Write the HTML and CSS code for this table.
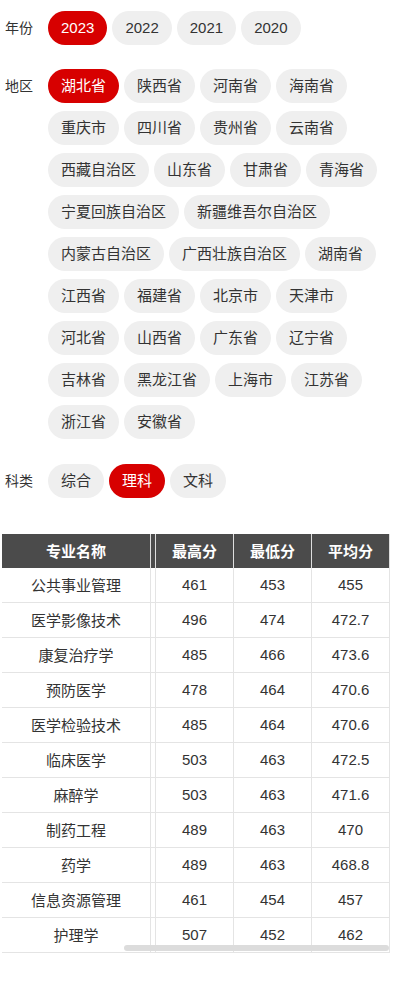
FILE: index.html
```html
<!DOCTYPE html>
<html lang="zh-CN">
<head>
<meta charset="utf-8">
<title>分数线</title>
<link rel="stylesheet" href="styles.css">
</head>
<body>
<div class="page">
  <div class="filter filter-year">
    <div class="label">年份</div>
    <div class="pills">
      <span class="pill active">2023</span>
      <span class="pill">2022</span>
      <span class="pill">2021</span>
      <span class="pill">2020</span>
    </div>
  </div>
  <div class="filter">
    <div class="label">地区</div>
    <div class="pills">
      <span class="pill active">湖北省</span>
      <span class="pill">陕西省</span>
      <span class="pill">河南省</span>
      <span class="pill">海南省</span>
      <span class="pill">重庆市</span>
      <span class="pill">四川省</span>
      <span class="pill">贵州省</span>
      <span class="pill">云南省</span>
      <span class="pill">西藏自治区</span>
      <span class="pill">山东省</span>
      <span class="pill">甘肃省</span>
      <span class="pill">青海省</span>
      <span class="pill">宁夏回族自治区</span>
      <span class="pill">新疆维吾尔自治区</span>
      <span class="pill">内蒙古自治区</span>
      <span class="pill">广西壮族自治区</span>
      <span class="pill">湖南省</span>
      <span class="pill">江西省</span>
      <span class="pill">福建省</span>
      <span class="pill">北京市</span>
      <span class="pill">天津市</span>
      <span class="pill">河北省</span>
      <span class="pill">山西省</span>
      <span class="pill">广东省</span>
      <span class="pill">辽宁省</span>
      <span class="pill">吉林省</span>
      <span class="pill">黑龙江省</span>
      <span class="pill">上海市</span>
      <span class="pill">江苏省</span>
      <span class="pill">浙江省</span>
      <span class="pill">安徽省</span>
    </div>
  </div>
  <div class="filter">
    <div class="label">科类</div>
    <div class="pills">
      <span class="pill">综合</span>
      <span class="pill active">理科</span>
      <span class="pill">文科</span>
    </div>
  </div>

  <div class="table-wrap">
    <div class="row head">
      <div class="cell">专业名称</div><div class="cell gap"></div><div class="cell">最高分</div><div class="cell">最低分</div><div class="cell">平均分</div>
    </div>
    <div class="row"><div class="cell">公共事业管理</div><div class="cell gap"></div><div class="cell">461</div><div class="cell">453</div><div class="cell">455</div></div>
    <div class="row"><div class="cell">医学影像技术</div><div class="cell gap"></div><div class="cell">496</div><div class="cell">474</div><div class="cell">472.7</div></div>
    <div class="row"><div class="cell">康复治疗学</div><div class="cell gap"></div><div class="cell">485</div><div class="cell">466</div><div class="cell">473.6</div></div>
    <div class="row"><div class="cell">预防医学</div><div class="cell gap"></div><div class="cell">478</div><div class="cell">464</div><div class="cell">470.6</div></div>
    <div class="row"><div class="cell">医学检验技术</div><div class="cell gap"></div><div class="cell">485</div><div class="cell">464</div><div class="cell">470.6</div></div>
    <div class="row"><div class="cell">临床医学</div><div class="cell gap"></div><div class="cell">503</div><div class="cell">463</div><div class="cell">472.5</div></div>
    <div class="row"><div class="cell">麻醉学</div><div class="cell gap"></div><div class="cell">503</div><div class="cell">463</div><div class="cell">471.6</div></div>
    <div class="row"><div class="cell">制药工程</div><div class="cell gap"></div><div class="cell">489</div><div class="cell">463</div><div class="cell">470</div></div>
    <div class="row"><div class="cell">药学</div><div class="cell gap"></div><div class="cell">489</div><div class="cell">463</div><div class="cell">468.8</div></div>
    <div class="row"><div class="cell">信息资源管理</div><div class="cell gap"></div><div class="cell">461</div><div class="cell">454</div><div class="cell">457</div></div>
    <div class="row"><div class="cell">护理学</div><div class="cell gap"></div><div class="cell">507</div><div class="cell">452</div><div class="cell">462</div></div>
    <div class="scrollbar"></div>
  </div>
</div>
</body>
</html>
```

FILE: styles.css
```css
* { box-sizing: border-box; }
html, body { margin: 0; padding: 0; background: #fff; }
body {
  font-family: "Liberation Sans", "Noto Sans CJK SC", sans-serif;
  color: #333;
}
.page { padding-top: 10.5px; }

.filter {
  display: flex;
  align-items: flex-start;
  padding-left: 5px;
  margin-bottom: 24.5px;
}
.label {
  width: 43px;
  flex: none;
  font-size: 14px;
  line-height: 34px;
  color: #333;
}
.pills {
  display: flex;
  flex-wrap: wrap;
  column-gap: 5px;
  row-gap: 8px;
  flex: 1;
}
.pill {
  display: block;
  height: 34px;
  line-height: 34px;
  padding: 0 13px;
  border-radius: 17px;
  background: #efefef;
  font-size: 15px;
  color: #333;
  white-space: nowrap;
}
.pill.active {
  background: #d70000;
  color: #fff;
}

.table-wrap {
  position: relative;
  margin: 36px 0 0 2px;
  width: 388px;
}
.row {
  display: grid;
  grid-template-columns: 149px 5px 78px 78px 78px;
  height: 35px;
  border-bottom: 1px solid #e4e4e4;
}
.cell {
  border-right: 1px solid #e4e4e4;
  display: flex;
  align-items: center;
  justify-content: center;
  font-size: 15px;
  color: #333;
}
.row.head {
  height: 34px;
  border-bottom: none;
  background: #4b4b4b;
}
.row.head .cell {
  color: #fff;
  font-weight: bold;
  border-right-color: #dedede;
}
.scrollbar {
  position: absolute;
  left: 122px;
  right: 1px;
  bottom: 2px;
  height: 6px;
  border-radius: 3px;
  background: #dcdcdc;
}
```
